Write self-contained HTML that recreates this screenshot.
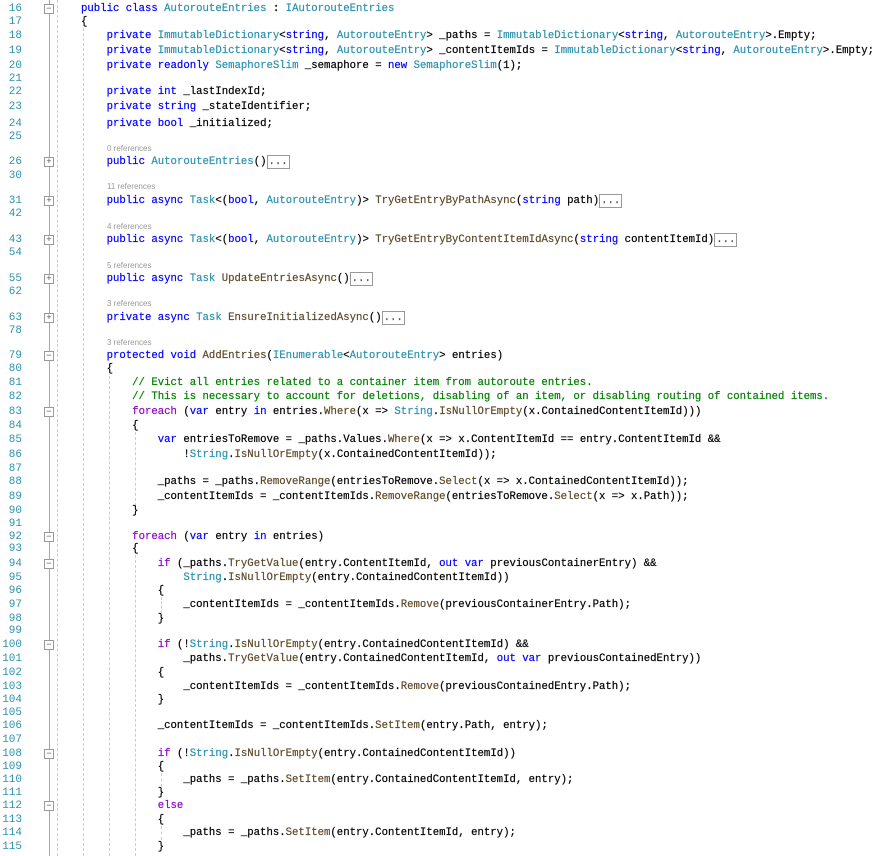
<!DOCTYPE html>
<html><head><meta charset="utf-8"><style>
body{margin:0;width:882px;height:856px;background:#fff;position:relative;overflow:hidden;font-family:"Liberation Mono",monospace;}
.l{position:absolute;left:81px;height:14px;line-height:14px;font-size:10.67px;white-space:pre;color:#000;-webkit-text-stroke:0.2px currentColor}
.n{position:absolute;left:0;width:22px;text-align:right;height:14px;line-height:14px;font-size:11px;color:#2b91af;font-family:"Liberation Mono",monospace}
.r{position:absolute;left:107px;font-family:"Liberation Sans",sans-serif;font-size:8px;color:#999;height:10px;line-height:10px}
.k{color:#0000ff}.t{color:#2b91af}.c{color:#008000}.p{color:#8f08c4}.m{color:#5e4a2a}
.d{border:1px solid #999;padding:0 1px;color:#555}
.f{position:absolute;left:44px;width:8px;height:8px;border:1px solid #999;background:#fff;font-size:9px;line-height:8px;text-align:center;color:#555;font-family:"Liberation Mono",monospace}
.g{position:absolute;border-left:1px dashed #ccc;width:0}
</style></head><body>
<div style="position:absolute;left:49px;top:0;width:1px;height:856px;background:#a5a5a5"></div>
<div class="g" style="left:57px;top:0;height:856px;border-left:1px dashed #ccc"></div>
<div class="g" style="left:83px;top:28px;height:828px"></div>
<div class="g" style="left:109px;top:376px;height:480px"></div>
<div class="g" style="left:135px;top:432px;height:74px"></div>
<div class="g" style="left:135px;top:555px;height:301px"></div>
<div class="g" style="left:161px;top:597px;height:16px"></div>
<div class="g" style="left:161px;top:773px;height:14px"></div>
<div class="g" style="left:161px;top:826px;height:14px"></div>

<div class="f" style="top:4px">−</div>
<div class="f" style="top:157px">+</div>
<div class="f" style="top:196px">+</div>
<div class="f" style="top:235px">+</div>
<div class="f" style="top:274px">+</div>
<div class="f" style="top:313px">+</div>
<div class="f" style="top:351px">−</div>
<div class="f" style="top:407px">−</div>
<div class="f" style="top:532px">−</div>
<div class="f" style="top:559px">−</div>
<div class="f" style="top:640px">−</div>
<div class="f" style="top:749px">−</div>
<div class="f" style="top:801px">−</div>

<div class="r" style="top:144px">0 references</div>
<div class="r" style="top:182px">11 references</div>
<div class="r" style="top:222px">4 references</div>
<div class="r" style="top:261px">5 references</div>
<div class="r" style="top:299px">3 references</div>
<div class="r" style="top:338px">3 references</div>

<div class="n" style="top:2px">16</div><div class="l" style="top:2px"><span class="k">public class</span> <span class="t">AutorouteEntries</span> : <span class="t">IAutorouteEntries</span></div>
<div class="n" style="top:15px">17</div><div class="l" style="top:15px">{</div>
<div class="n" style="top:29px">18</div><div class="l" style="top:29px">    <span class="k">private</span> <span class="t">ImmutableDictionary</span>&lt;<span class="k">string</span>, <span class="t">AutorouteEntry</span>&gt; _paths = <span class="t">ImmutableDictionary</span>&lt;<span class="k">string</span>, <span class="t">AutorouteEntry</span>&gt;.Empty;</div>
<div class="n" style="top:44px">19</div><div class="l" style="top:44px">    <span class="k">private</span> <span class="t">ImmutableDictionary</span>&lt;<span class="k">string</span>, <span class="t">AutorouteEntry</span>&gt; _contentItemIds = <span class="t">ImmutableDictionary</span>&lt;<span class="k">string</span>, <span class="t">AutorouteEntry</span>&gt;.Empty;</div>
<div class="n" style="top:59px">20</div><div class="l" style="top:59px">    <span class="k">private readonly</span> <span class="t">SemaphoreSlim</span> _semaphore = <span class="k">new</span> <span class="t">SemaphoreSlim</span>(1);</div>
<div class="n" style="top:72px">21</div>
<div class="n" style="top:85px">22</div><div class="l" style="top:85px">    <span class="k">private int</span> _lastIndexId;</div>
<div class="n" style="top:100px">23</div><div class="l" style="top:100px">    <span class="k">private string</span> _stateIdentifier;</div>
<div class="n" style="top:117px">24</div><div class="l" style="top:117px">    <span class="k">private bool</span> _initialized;</div>
<div class="n" style="top:130px">25</div>
<div class="n" style="top:155px">26</div><div class="l" style="top:155px">    <span class="k">public</span> <span class="t">AutorouteEntries</span>()<span class="d">...</span></div>
<div class="n" style="top:169px">30</div>
<div class="n" style="top:194px">31</div><div class="l" style="top:194px">    <span class="k">public async</span> <span class="t">Task</span>&lt;(<span class="k">bool</span>, <span class="t">AutorouteEntry</span>)&gt; <span class="m">TryGetEntryByPathAsync</span>(<span class="k">string</span> path)<span class="d">...</span></div>
<div class="n" style="top:207px">42</div>
<div class="n" style="top:233px">43</div><div class="l" style="top:233px">    <span class="k">public async</span> <span class="t">Task</span>&lt;(<span class="k">bool</span>, <span class="t">AutorouteEntry</span>)&gt; <span class="m">TryGetEntryByContentItemIdAsync</span>(<span class="k">string</span> contentItemId)<span class="d">...</span></div>
<div class="n" style="top:246px">54</div>
<div class="n" style="top:272px">55</div><div class="l" style="top:272px">    <span class="k">public async</span> <span class="t">Task</span> <span class="m">UpdateEntriesAsync</span>()<span class="d">...</span></div>
<div class="n" style="top:285px">62</div>
<div class="n" style="top:311px">63</div><div class="l" style="top:311px">    <span class="k">private async</span> <span class="t">Task</span> <span class="m">EnsureInitializedAsync</span>()<span class="d">...</span></div>
<div class="n" style="top:324px">78</div>
<div class="n" style="top:349px">79</div><div class="l" style="top:349px">    <span class="k">protected void</span> <span class="m">AddEntries</span>(<span class="t">IEnumerable</span>&lt;<span class="t">AutorouteEntry</span>&gt; entries)</div>
<div class="n" style="top:362px">80</div><div class="l" style="top:362px">    {</div>
<div class="n" style="top:376px">81</div><div class="l c" style="top:376px">        // Evict all entries related to a container item from autoroute entries.</div>
<div class="n" style="top:390px">82</div><div class="l c" style="top:390px">        // This is necessary to account for deletions, disabling of an item, or disabling routing of contained items.</div>
<div class="n" style="top:405px">83</div><div class="l" style="top:405px">        <span class="p">foreach</span> (<span class="k">var</span> entry <span class="k">in</span> entries.<span class="m">Where</span>(x =&gt; <span class="t">String</span>.<span class="m">IsNullOrEmpty</span>(x.ContainedContentItemId)))</div>
<div class="n" style="top:419px">84</div><div class="l" style="top:419px">        {</div>
<div class="n" style="top:433px">85</div><div class="l" style="top:433px">            <span class="k">var</span> entriesToRemove = _paths.Values.<span class="m">Where</span>(x =&gt; x.ContentItemId == entry.ContentItemId &amp;&amp;</div>
<div class="n" style="top:448px">86</div><div class="l" style="top:448px">                !<span class="t">String</span>.<span class="m">IsNullOrEmpty</span>(x.ContainedContentItemId));</div>
<div class="n" style="top:462px">87</div>
<div class="n" style="top:475px">88</div><div class="l" style="top:475px">            _paths = _paths.<span class="m">RemoveRange</span>(entriesToRemove.<span class="m">Select</span>(x =&gt; x.ContainedContentItemId));</div>
<div class="n" style="top:490px">89</div><div class="l" style="top:490px">            _contentItemIds = _contentItemIds.<span class="m">RemoveRange</span>(entriesToRemove.<span class="m">Select</span>(x =&gt; x.Path));</div>
<div class="n" style="top:504px">90</div><div class="l" style="top:504px">        }</div>
<div class="n" style="top:517px">91</div>
<div class="n" style="top:530px">92</div><div class="l" style="top:530px">        <span class="p">foreach</span> (<span class="k">var</span> entry <span class="k">in</span> entries)</div>
<div class="n" style="top:542px">93</div><div class="l" style="top:542px">        {</div>
<div class="n" style="top:557px">94</div><div class="l" style="top:557px">            <span class="p">if</span> (_paths.<span class="m">TryGetValue</span>(entry.ContentItemId, <span class="k">out var</span> previousContainerEntry) &amp;&amp;</div>
<div class="n" style="top:571px">95</div><div class="l" style="top:571px">                <span class="t">String</span>.<span class="m">IsNullOrEmpty</span>(entry.ContainedContentItemId))</div>
<div class="n" style="top:584px">96</div><div class="l" style="top:584px">            {</div>
<div class="n" style="top:598px">97</div><div class="l" style="top:598px">                _contentItemIds = _contentItemIds.<span class="m">Remove</span>(previousContainerEntry.Path);</div>
<div class="n" style="top:612px">98</div><div class="l" style="top:612px">            }</div>
<div class="n" style="top:624px">99</div>
<div class="n" style="top:638px">100</div><div class="l" style="top:638px">            <span class="p">if</span> (!<span class="t">String</span>.<span class="m">IsNullOrEmpty</span>(entry.ContainedContentItemId) &amp;&amp;</div>
<div class="n" style="top:652px">101</div><div class="l" style="top:652px">                _paths.<span class="m">TryGetValue</span>(entry.ContainedContentItemId, <span class="k">out var</span> previousContainedEntry))</div>
<div class="n" style="top:666px">102</div><div class="l" style="top:666px">            {</div>
<div class="n" style="top:680px">103</div><div class="l" style="top:680px">                _contentItemIds = _contentItemIds.<span class="m">Remove</span>(previousContainedEntry.Path);</div>
<div class="n" style="top:693px">104</div><div class="l" style="top:693px">            }</div>
<div class="n" style="top:706px">105</div>
<div class="n" style="top:719px">106</div><div class="l" style="top:719px">            _contentItemIds = _contentItemIds.<span class="m">SetItem</span>(entry.Path, entry);</div>
<div class="n" style="top:733px">107</div>
<div class="n" style="top:747px">108</div><div class="l" style="top:747px">            <span class="p">if</span> (!<span class="t">String</span>.<span class="m">IsNullOrEmpty</span>(entry.ContainedContentItemId))</div>
<div class="n" style="top:760px">109</div><div class="l" style="top:760px">            {</div>
<div class="n" style="top:773px">110</div><div class="l" style="top:773px">                _paths = _paths.<span class="m">SetItem</span>(entry.ContainedContentItemId, entry);</div>
<div class="n" style="top:786px">111</div><div class="l" style="top:786px">            }</div>
<div class="n" style="top:799px">112</div><div class="l" style="top:799px">            <span class="p">else</span></div>
<div class="n" style="top:813px">113</div><div class="l" style="top:813px">            {</div>
<div class="n" style="top:826px">114</div><div class="l" style="top:826px">                _paths = _paths.<span class="m">SetItem</span>(entry.ContentItemId, entry);</div>
<div class="n" style="top:840px">115</div><div class="l" style="top:840px">            }</div>
</body></html>
